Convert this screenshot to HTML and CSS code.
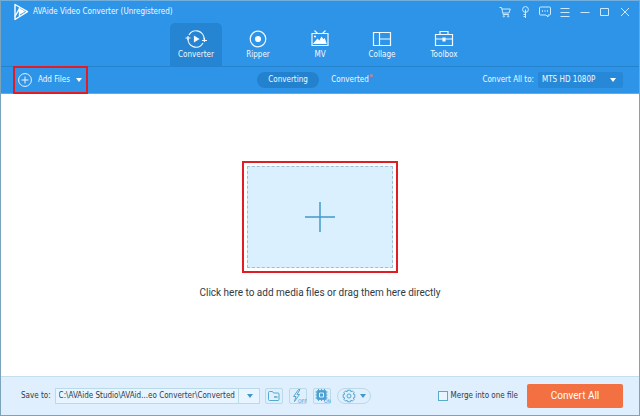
FILE: index.html
```html
<!DOCTYPE html>
<html lang="en">
<head>
  <meta charset="UTF-8">
  <meta name="viewport" content="width=device-width, initial-scale=1.0">
  <title>AVAide Video Converter</title>
  <link rel="stylesheet" href="styles.css">
</head>
<body>
  <div class="app">
    <header class="header">
      <div class="titlebar">
        <svg class="logo" width="16" height="18" viewBox="0 0 16 18" fill="none" stroke="#fff" stroke-width="1.4" stroke-linejoin="round">
          <path d="M2 1.500 14.500 8.700 2 16.500z"/>
          <path d="M2 13.500 7 4.500M6.500 13V5"/>
          <path d="M7.500 6.500v4l3.500-2z" fill="#fff"/>
        </svg>
        <h1 class="title">AVAide Video Converter (Unregistered)</h1>
        <div class="window-tools">
          <button class="tool" aria-label="Buy">
            <svg width="12" height="12" viewBox="0 0 12 12"><path d="M.5 1.500h2l1.700 7h5.600M3 3h8.300l-1.400 4H4"/><circle cx="4.800" cy="10.300" r=".7"/><circle cx="9.200" cy="10.300" r=".7"/></svg>
          </button>
          <button class="tool" aria-label="Register">
            <svg width="12" height="12" viewBox="0 0 12 12"><circle cx="6.500" cy="3.500" r="2.900"/><path d="M6.500 3.500v8.500M6.500 8.500h-2M6.500 10.500h-2"/></svg>
          </button>
          <button class="tool" aria-label="Feedback">
            <svg width="12" height="12" viewBox="0 0 12 12"><path d="M1.500 1h9q1 0 1 1v6q0 1-1 1H9v2L7 9H1.500q-1 0-1-1V2q0-1 1-1z"/><path d="M3 5h1M5.500 5h1M8 5h1" stroke-width="1.400"/></svg>
          </button>
          <button class="tool" aria-label="Menu">
            <svg width="12" height="12" viewBox="0 0 12 12"><path d="M1.500 2.500h9M1.500 6.500h9M1.500 10.500h9"/></svg>
          </button>
          <button class="tool" aria-label="Minimize">
            <svg width="12" height="12" viewBox="0 0 12 12"><path d="M1.500 6.500h9"/></svg>
          </button>
          <button class="tool" aria-label="Maximize">
            <svg width="12" height="12" viewBox="0 0 12 12"><path d="M1.500 2.500h8v7h-8z"/></svg>
          </button>
          <button class="tool" aria-label="Close">
            <svg width="12" height="12" viewBox="0 0 12 12"><path d="m2 2 8 8M10 2l-8 8"/></svg>
          </button>
        </div>
      </div>

      <nav class="tabs">
        <a class="tab tab-active" href="#converter">
          <svg width="22" height="20" viewBox="0 0 22 20"><path d="M4 6A8 8 0 0 1 19 10.500M18 14A8 8 0 0 1 3 9.500"/><path d="M17 11.500h5M19.500 9v4M.5 9h5M3 7v4"/><path class="fill" d="M9.500 7.500v5l4-2.500z"/></svg>
          <span>Converter</span>
        </a>
        <a class="tab" href="#ripper">
          <svg width="22" height="20" viewBox="0 0 22 20"><circle cx="11" cy="10" r="7.800"/><circle class="fill" cx="11" cy="10" r="2.500"/></svg>
          <span>Ripper</span>
        </a>
        <a class="tab" href="#mv">
          <svg width="22" height="20" viewBox="0 0 22 20"><path d="M3 4.500h16v12H3zM5.500 1.500l3 3M16.500 1.500l-3 3"/><path class="fill" d="m5 14.500 3.500-4 2 2 2-4 2 2.500 1-1 1.500 4.500z"/><circle class="fill" cx="6" cy="7.500" r=".5"/></svg>
          <span>MV</span>
        </a>
        <a class="tab" href="#collage">
          <svg width="22" height="20" viewBox="0 0 22 20"><path d="M2.500 3.500h17v13h-17zM8.500 3.500v13M8.500 10h11"/></svg>
          <span>Collage</span>
        </a>
        <a class="tab" href="#toolbox">
          <svg width="22" height="20" viewBox="0 0 22 20"><path d="M2.500 5.500h17v11h-17zM7 5.500v-3h8v3M2.500 10h17"/><path class="fill" d="M10 9h2v3h-2z"/></svg>
          <span>Toolbox</span>
        </a>
      </nav>

      <div class="toolbar">
        <button class="add-files">
          <svg width="14" height="14" viewBox="0 0 14 14" fill="none" stroke="#e8f5ff"><circle cx="7" cy="7" r="6.400"/><path d="M7 3.500v7M3.500 7h7"/></svg>
          <span>Add Files</span>
          <svg width="6" height="4" viewBox="0 0 6 4"><path d="M0 0h6L3 4z" fill="#fff"/></svg>
        </button>
        <div class="views">
          <button class="view view-active">Converting</button>
          <button class="view">Converted<span class="badge"></span></button>
        </div>
        <div class="format">
          <label for="format">Convert All to:</label>
          <div class="select-wrap">
            <select class="format-select" id="format"><option>MTS HD 1080P</option></select>
            <svg class="arrow" width="6" height="4" viewBox="0 0 6 4"><path d="M0 0h6L3 4z" fill="#fff"/></svg>
          </div>
        </div>
      </div>
    </header>

    <main class="main">
      <button class="drop-zone" aria-label="Add media files">
        <span class="drop-area">
          <svg width="32" height="32" viewBox="0 0 32 32"><path d="M16 1v30M1 16h30" stroke="#4399cc" stroke-width="1.500"/></svg>
        </span>
      </button>
      <p class="hint">Click here to add media files or drag them here directly</p>
    </main>

    <footer class="footer">
      <label for="folder">Save to:</label>
      <div class="select-wrap folder-wrap">
        <select class="folder-select" id="folder"><option>C:\AVAide Studio\AVAid...eo Converter\Converted</option></select>
        <svg class="arrow" width="6" height="4" viewBox="0 0 6 4"><path d="M0 0h6L3 4z" fill="#3f98c9"/></svg>
      </div>
      <div class="options">
        <button class="option" aria-label="Open folder">
          <svg width="16" height="16" viewBox="0 0 16 16"><path d="M3.500 3.500h3l1 1.500h4.500q1 0 1 1v5.500q0 1-1 1H3.500q-1 0-1-1v-7q0-1 1-1z"/><path d="M8 9h3.500" stroke-width="1.500"/></svg>
        </button>
        <button class="option" aria-label="High speed conversion off">
          <svg width="16" height="16" viewBox="0 0 16 16"><path d="M8.500 1.500 3.500 8.500h2.500l-1.500 5 5-7H7l3-5z"/><text x="8" y="15">OFF</text></svg>
        </button>
        <button class="option" aria-label="Hardware acceleration on">
          <svg width="16" height="16" viewBox="0 0 16 16"><path d="M4.500 1v12M7.500 1v12M10.500 1v12M1.500 4h12M1.500 7h12M1.500 10h12"/><rect x="3" y="2.500" width="9" height="9" rx="1" fill="#4a9fd3"/><path d="M5.500 5h4v4h-4z" stroke="#dff1ff"/><text x="10" y="15">ON</text></svg>
        </button>
        <button class="option settings" aria-label="Settings">
          <svg width="14" height="14" viewBox="0 0 14 14"><path d="m5.500 1.200h3l.4 1.600 1.500-.9 1.700 1.700-.9 1.500 1.600.4v3l-1.600.4.9 1.500-1.700 1.700-1.500-.9-.4 1.600h-3l-.4-1.600-1.500.9-1.700-1.700.9-1.500-1.600-.4v-3l1.600-.4-.9-1.500 1.700-1.700 1.500.9z"/><circle cx="7" cy="7" r="2"/></svg>
          <svg width="6" height="4" viewBox="0 0 6 4"><path class="solid" d="M0 0h6L3 4z"/></svg>
        </button>
      </div>
      <label class="merge"><input type="checkbox">Merge into one file</label>
      <button class="convert">Convert All</button>
    </footer>
  </div>
</body>
</html>
```

FILE: styles.css
```css
* {
  box-sizing: border-box;
}
body {
  margin: 0;
  font-family: "DejaVu Sans Condensed", Roboto, sans-serif;
  font-size: 8px;
  line-height: 12px;
  color: #303b45;
}
button, select, input {
  margin: 0;
  padding: 0;
  border: none;
  background: none;
  font: inherit;
  color: inherit;
}
button {
  cursor: pointer;
}
svg {
  display: block;
  flex: none;
}
.app {
  display: flex;
  flex-direction: column;
  min-height: 100vh;
  border: 1px solid #7ba3bb;
  border-top-color: #71afdf;
  background: #fff;
}

/* header */
.header {
  background: #2e94e8;
  color: #f2f9ff;
  border-bottom: 1px solid #63abe5;
}
.titlebar {
  display: flex;
  align-items: center;
  height: 22px;
  padding: 0 8px 0 12px;
}
.title {
  margin: 0 0 0 4px;
  font-size: 8px;
  font-weight: normal;
}
.window-tools {
  display: flex;
  gap: 8px;
  margin-left: auto;
}
.tool svg {
  fill: none;
  stroke: #cceaff;
}
.tabs {
  display: flex;
  justify-content: center;
  gap: 10px;
  border-bottom: 1px solid #2582cc;
}
.tab {
  display: flex;
  flex-direction: column;
  align-items: center;
  width: 52px;
  height: 43px;
  padding-top: 6px;
  border-radius: 5px 5px 0 0;
  color: inherit;
  text-decoration: none;
}
.tab-active {
  background: #2585d3;
}
.tab svg {
  fill: none;
  stroke: #f2f9ff;
  stroke-width: 1.2;
}
.tab .fill {
  fill: #fff;
}
.toolbar {
  display: grid;
  grid-template-columns: 1fr auto 1fr;
  align-items: center;
  height: 26px;
  padding: 0 16px 0 14px;
}
.add-files {
  display: flex;
  align-items: center;
  justify-self: start;
  gap: 6px;
  height: 24px;
  padding: 0 4px 0 3px;
  outline: 2px solid #e01c24;
}
.views {
  display: flex;
}
.view {
  position: relative;
  height: 16px;
  width: 62px;
  border-radius: 8px;
}
.view-active {
  background: #2381ce;
}
.badge {
  position: absolute;
  top: 2px;
  right: 8px;
  width: 3px;
  height: 3px;
  border-radius: 50%;
  background: #dd7d7c;
}
.format {
  display: flex;
  align-items: center;
  justify-self: end;
  gap: 4px;
}
.select-wrap {
  position: relative;
}
.select-wrap select {
  display: block;
  width: 100%;
  height: 16px;
  padding: 0 4px;
  appearance: none;
}
.arrow {
  position: absolute;
  top: 6px;
  right: 7px;
  pointer-events: none;
}
.format .select-wrap {
  width: 85px;
}
.select-wrap .format-select {
  border-radius: 2px;
  background: #2788d8;
}

/* drop area */
.main {
  flex: 1;
  display: flex;
  flex-direction: column;
  align-items: center;
  justify-content: center;
  padding: 8px 16px 16px;
}
.drop-zone {
  width: 156px;
  height: 112px;
  padding: 3px;
  border: 2px solid #e01c24;
}
.drop-area {
  display: flex;
  align-items: center;
  justify-content: center;
  height: 100%;
  border: 1px dashed #9fc0d3;
  background: #daf0fe;
}
.hint {
  margin: 12px 0 0;
  font-family: Roboto, sans-serif;
  font-size: 10px;
  line-height: 16px;
}

/* footer */
.footer {
  display: flex;
  align-items: center;
  height: 39px;
  padding: 0 16px 0 20px;
  background: #dfeffe;
  border-top: 1px solid #c5dfee;
}
.folder-wrap {
  width: 205px;
  margin-left: 4px;
}
.select-wrap .folder-select {
  padding: 0 3px;
  border: 1px solid #b9dbe9;
  background: linear-gradient(#b9dbe9, #b9dbe9) right 20px top / 1px 100% no-repeat #e8f4ff;
}
.options {
  display: flex;
  gap: 6px;
  margin-left: 5px;
}
.option {
  display: flex;
  align-items: center;
  justify-content: center;
  width: 18px;
  height: 16px;
  border: 1px solid #b9dbe9;
  border-radius: 2px;
}
.option svg {
  fill: none;
  stroke: #55a8cf;
  overflow: visible;
}
.option text {
  font-size: 5px;
  fill: #4a9fd3;
  stroke: none;
}
.option .solid {
  fill: #3f98c9;
  stroke: none;
}
.settings {
  gap: 4px;
  width: 34px;
  border-radius: 8px;
}
.merge {
  display: flex;
  align-items: center;
  gap: 3px;
  margin-left: auto;
}
.merge input {
  width: 10px;
  height: 10px;
  appearance: none;
  border: 1px solid #58abc9;
  background: #e8f4ff;
}
.merge input:checked {
  background: #58abc9;
}
.convert {
  width: 96px;
  height: 24px;
  margin-left: 9px;
  border-radius: 2px;
  background: #f37043;
  color: #fff;
  font-family: Roboto, sans-serif;
  font-size: 10px;
}
```
